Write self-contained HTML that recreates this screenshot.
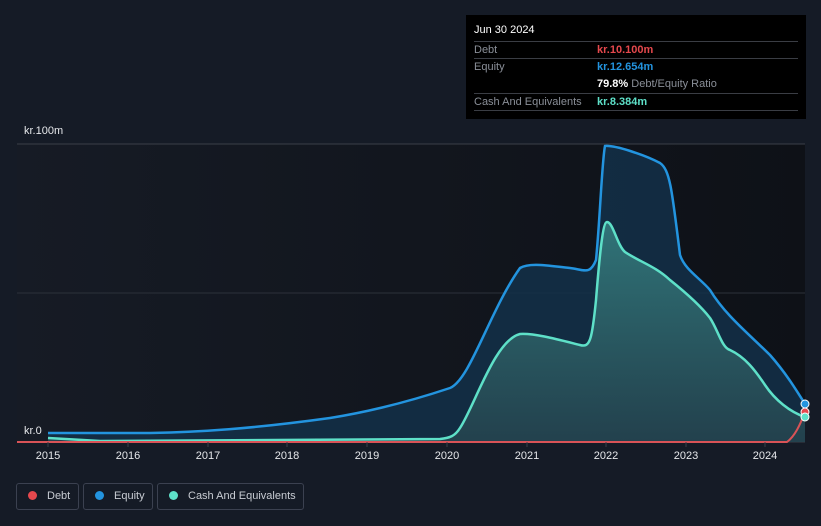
<!DOCTYPE html>
<html><head><meta charset="utf-8"><style>
body{margin:0;width:821px;height:526px;background:#151b26;font-family:"Liberation Sans",sans-serif;overflow:hidden;position:relative}
.tt{position:absolute;left:466px;top:15px;width:340px;height:104px;background:#000;font-size:11px;color:#8a8f98}
.tt .r{position:absolute;left:8px;right:8px;border-top:1px solid #3a3d44;height:17px;line-height:17px}
.leg{position:absolute;top:483px;height:27px;border:1px solid #3b4150;border-radius:3px;color:#c8ccd3;font-size:11px;line-height:25px;box-sizing:border-box;white-space:nowrap}
.leg i{display:inline-block;width:9px;height:9px;border-radius:50%;margin:0 10px 0 11px;vertical-align:-1px}
.yr{position:absolute;top:450px;color:#e6e8eb;font-size:11px;width:40px;margin-left:-20px;text-align:center}
</style></head><body>
<svg width="821" height="526" style="position:absolute;left:0;top:0">
<defs><linearGradient id="cg" x1="0" y1="0" x2="0" y2="1"><stop offset="0" stop-color="#3a8c8a" stop-opacity=".75"/><stop offset="1" stop-color="#2a4a52" stop-opacity=".7"/></linearGradient>
<linearGradient id="bg" x1="0" y1="0" x2="1" y2="0"><stop offset="0" stop-color="#161b25"/><stop offset="1" stop-color="#0e1117"/></linearGradient></defs>
<rect x="17" y="144" width="788" height="298" fill="url(#bg)"/>
<line x1="17" y1="144" x2="805" y2="144" stroke="#3a3f48"/>
<line x1="17" y1="293" x2="805" y2="293" stroke="#2c313a"/>
<line x1="17" y1="442" x2="805" y2="442" stroke="#3a3f48"/>
<path d="M48,433 L150,433 C200,432 250,429 330,418 C380,410 420,398 450,388 C470,380 490,310 520,268 C530,262 550,266 570,268 C585,270 590,275 596,260 C600,220 602,160 605,146 C615,145 645,155 660,163 C670,170 672,190 680,255 C685,270 700,278 710,290 C725,315 750,335 770,355 C785,372 795,388 805,404 L805,442 L48,442Z" fill="#133049" opacity=".85"/>
<path d="M48,438 L100,441 L440,439 C450,438 455,436 460,428 C475,405 495,340 520,334 C535,333 560,340 580,345 C590,348 592,340 596,300 C600,250 603,222 607,222 C613,222 617,245 625,252 C640,262 655,266 670,280 C685,292 700,305 710,318 C718,330 722,348 730,350 C745,357 755,370 765,385 C775,400 790,412 805,417 L805,442 L48,442Z" fill="url(#cg)"/>
<path d="M48,433 L150,433 C200,432 250,429 330,418 C380,410 420,398 450,388 C470,380 490,310 520,268 C530,262 550,266 570,268 C585,270 590,275 596,260 C600,220 602,160 605,146 C615,145 645,155 660,163 C670,170 672,190 680,255 C685,270 700,278 710,290 C725,315 750,335 770,355 C785,372 795,388 805,404" fill="none" stroke="#2394df" stroke-width="2.5"/>
<path d="M48,438 L100,441 L440,439 C450,438 455,436 460,428 C475,405 495,340 520,334 C535,333 560,340 580,345 C590,348 592,340 596,300 C600,250 603,222 607,222 C613,222 617,245 625,252 C640,262 655,266 670,280 C685,292 700,305 710,318 C718,330 722,348 730,350 C745,357 755,370 765,385 C775,400 790,412 805,417" fill="none" stroke="#5ee0c8" stroke-width="2.5"/>
<path d="M17,442 L787,442 C795,436 800,425 805,412" fill="none" stroke="#d95357" stroke-width="2"/>
<circle cx="805" cy="404" r="4" fill="#2394df" stroke="#fff" stroke-width="1"/>
<circle cx="805" cy="412" r="4" fill="#e5484d" stroke="#fff" stroke-width="1"/>
<circle cx="805" cy="417" r="4" fill="#5ee0c8" stroke="#fff" stroke-width="1"/>
<g stroke="#3a3f48"><line x1="48" y1="442" x2="48" y2="447"/><line x1="128" y1="442" x2="128" y2="447"/><line x1="208" y1="442" x2="208" y2="447"/><line x1="287" y1="442" x2="287" y2="447"/><line x1="367" y1="442" x2="367" y2="447"/><line x1="447" y1="442" x2="447" y2="447"/><line x1="527" y1="442" x2="527" y2="447"/><line x1="606" y1="442" x2="606" y2="447"/><line x1="686" y1="442" x2="686" y2="447"/><line x1="765" y1="442" x2="765" y2="447"/></g>
</svg>
<div class="tt">
<div style="position:absolute;left:8px;top:9px;color:#fff;font-size:11px">Jun 30 2024</div>
<div class="r" style="top:26px">Debt<span style="position:absolute;left:123px;color:#e5484d;font-weight:bold">kr.10.100m</span></div>
<div class="r" style="top:43px">Equity<span style="position:absolute;left:123px;color:#2394df;font-weight:bold">kr.12.654m</span></div>
<div style="position:absolute;left:131px;top:61px;height:17px;line-height:17px"><b style="color:#fff">79.8%</b> Debt/Equity Ratio</div>
<div class="r" style="top:78px">Cash And Equivalents<span style="position:absolute;left:123px;color:#5ee0c8;font-weight:bold">kr.8.384m</span></div>
<div class="r" style="top:95px"></div>
</div>
<div style="position:absolute;left:24px;top:125px;color:#e6e8eb;font-size:11px">kr.100m</div>
<div style="position:absolute;left:24px;top:425px;color:#e6e8eb;font-size:11px">kr.0</div>
<div class="yr" style="left:48px">2015</div><div class="yr" style="left:128px">2016</div><div class="yr" style="left:208px">2017</div><div class="yr" style="left:287px">2018</div><div class="yr" style="left:367px">2019</div><div class="yr" style="left:447px">2020</div><div class="yr" style="left:527px">2021</div><div class="yr" style="left:606px">2022</div><div class="yr" style="left:686px">2023</div><div class="yr" style="left:765px">2024</div>
<div class="leg" style="left:16px;width:63px"><i style="background:#e5484d"></i>Debt</div>
<div class="leg" style="left:83px;width:70px"><i style="background:#2394df"></i>Equity</div>
<div class="leg" style="left:157px;width:147px"><i style="background:#5ee0c8"></i>Cash And Equivalents</div>
</body></html>
